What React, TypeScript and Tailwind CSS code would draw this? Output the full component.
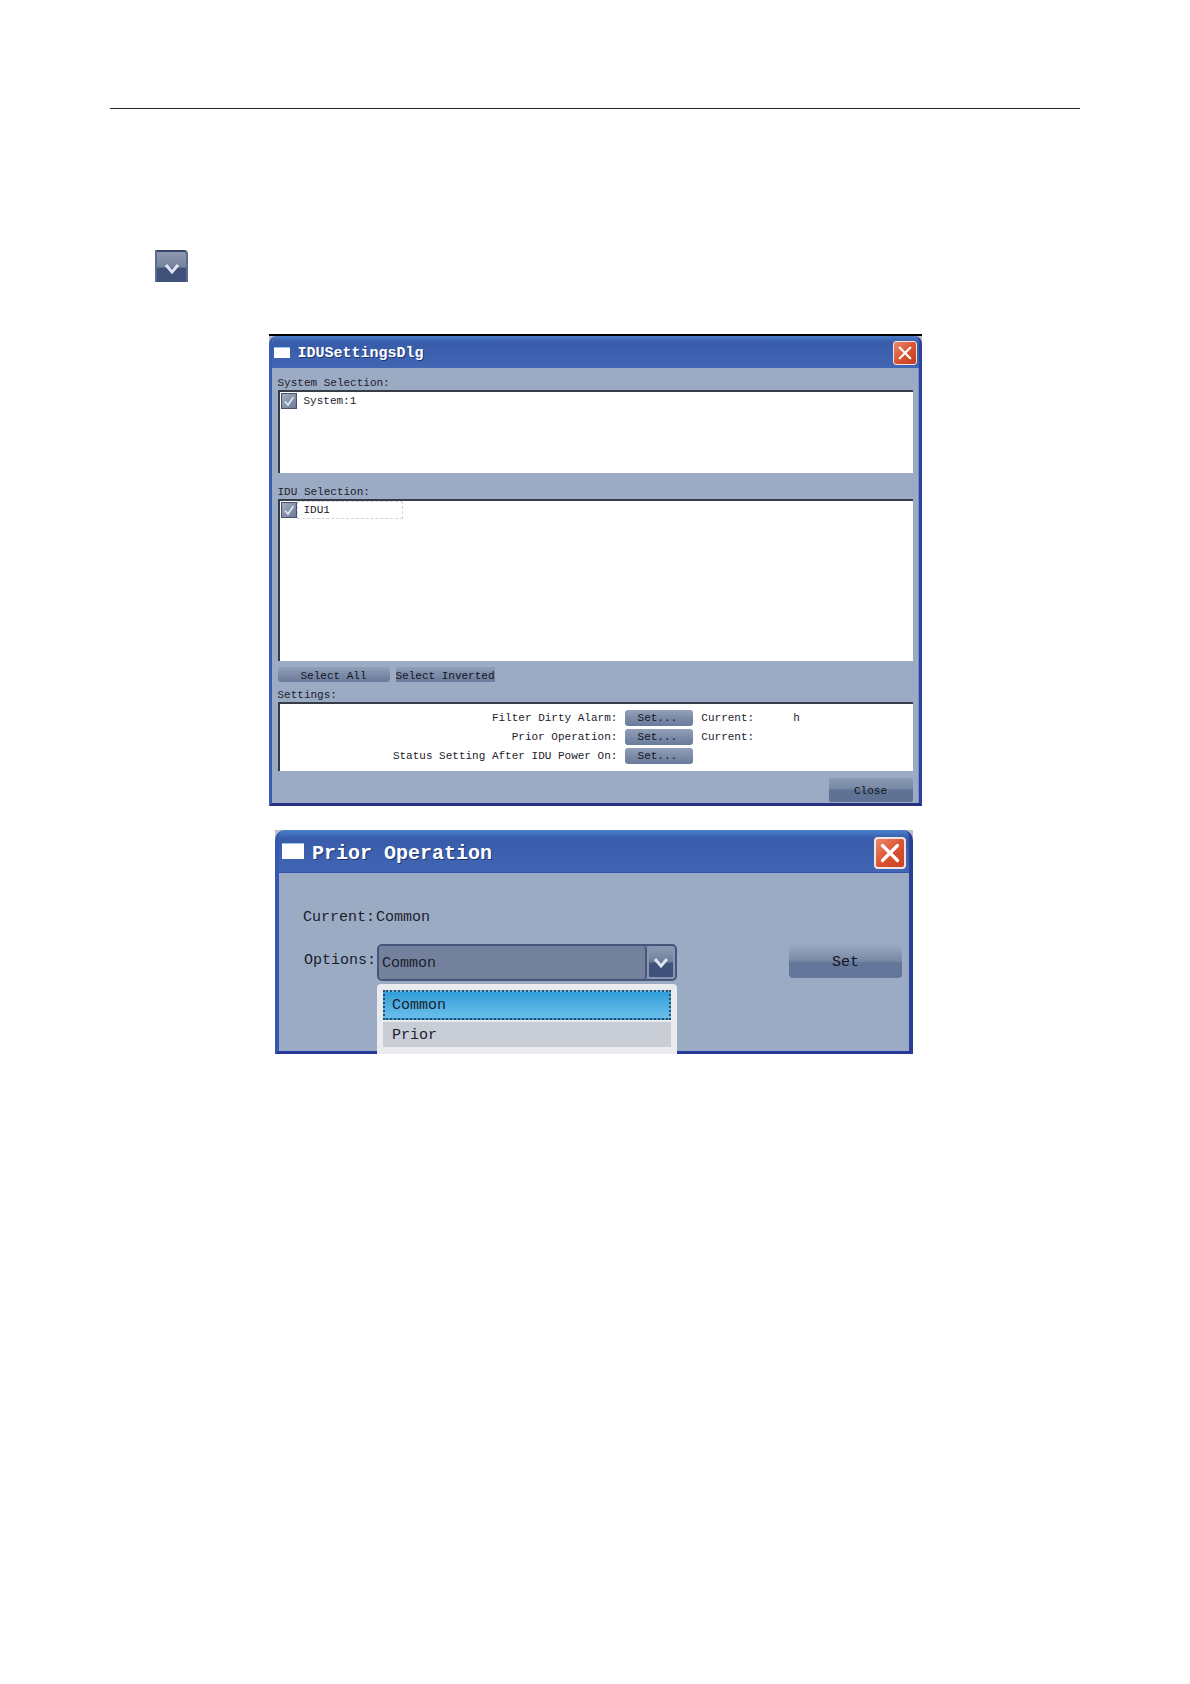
import { useId, useState } from 'react';
import type { ReactNode } from 'react';

const raised =
  'bg-linear-to-b from-[#93a0b9] via-[#7d8ba8] to-[#6a7b9b] text-[#10151f] hover:brightness-105';

function CloseIcon({ className }: { className: string }) {
  return (
    <svg viewBox="0 0 16 16" className={className} aria-hidden="true">
      <path d="M2 2 L14 14 M14 2 L2 14" stroke="#fff" strokeWidth="2.6" strokeLinecap="round" fill="none" />
    </svg>
  );
}

function Chevron({ className }: { className: string }) {
  return (
    <svg viewBox="0 0 16 12" className={className} aria-hidden="true">
      <path d="M2 2 L8 9 L14 2" stroke="#dbe6f0" strokeWidth="3" fill="none" />
    </svg>
  );
}

function CheckItem({ label, focused }: { label: string; focused?: boolean }) {
  const id = useId();
  const [checked, setChecked] = useState(true);
  return (
    <div className="flex items-center pl-px">
      <span className="grid">
        <input
          id={id}
          type="checkbox"
          checked={checked}
          onChange={(e) => setChecked(e.target.checked)}
          className="col-start-1 row-start-1 size-4 appearance-none border border-[#46526c] bg-linear-to-br from-[#a3adbd] to-[#6b7b9a]"
        />
        {checked && (
          <svg viewBox="0 0 16 16" className="pointer-events-none col-start-1 row-start-1 size-4" aria-hidden="true">
            <path d="M4 8.5 L7 12 L12.5 4" stroke="#dde5ee" strokeWidth="1.8" fill="none" />
          </svg>
        )}
      </span>
      <label
        htmlFor={id}
        className={
          focused
            ? 'w-[106px] border border-dashed border-[#d3d3d9] pl-[6px] leading-4'
            : 'border border-transparent pl-[6px] leading-4'
        }
      >
        {label}
      </label>
    </div>
  );
}

function Box({ className, children }: { className: string; children: ReactNode }) {
  return <div className={`border-t-2 border-l-2 border-[#363c48] bg-white ${className}`}>{children}</div>;
}

function SettingRow({ name, children }: { name: string; children?: ReactNode }) {
  return (
    <>
      <span className="pt-px text-right">{name}</span>
      <button type="button" aria-label={`${name} Set`} className={`h-4 rounded-[3px] pt-px pr-1 leading-[15px] ${raised}`}>
        Set...
      </button>
      <span className="pt-px">{children}</span>
    </>
  );
}

function SettingsDialog() {
  return (
    <section className="mx-auto w-full max-w-[653px] border-t-2 border-black bg-[#b9c0cc] text-[11px] leading-[15px] text-[#1b212c]">
      <div className="overflow-hidden rounded-t-lg border-r-[3px] border-b-[3px] border-l-[3px] border-r-[#2b419b] border-b-[#26317f] border-l-[#3a5cb0] bg-[#9cabc4]">
        <header className="flex h-8 items-center bg-linear-to-b from-[#4a7cc8] from-0% via-[#385ca9] via-20% to-[#4166b3] pr-[2px] pl-[2px]">
          <span className="h-[11px] w-4 border-t border-[#8fc8e6] bg-white" />
          <h2 className="ml-2 flex-1 pt-[3px] text-[15px] font-bold text-white [text-shadow:1px_1px_0_#1f3472]">
            IDUSettingsDlg
          </h2>
          <button
            type="button"
            aria-label="Close window"
            className="mt-[2px] grid size-6 place-items-center rounded-[3px] border border-[#f3e4e4] bg-linear-to-br from-[#e88a6c] via-[#dc5433] to-[#c23c1d]"
          >
            <CloseIcon className="size-[14px]" />
          </button>
        </header>
        <div className="border-r border-r-[#7390cb] pr-[5px] pb-px pl-[6px]">
          <h3 className="pt-2 leading-[14px]">System Selection:</h3>
          <Box className="h-[83px]">
            <CheckItem label="System:1" />
          </Box>
          <h3 className="pt-3 leading-[14px]">IDU Selection:</h3>
          <Box className="h-[162px]">
            <CheckItem label="IDU1" focused />
          </Box>
          <div className="mt-[6px] flex gap-[6px]">
            <button type="button" className={`h-[15px] w-28 rounded-[3px] pt-[3px] leading-3 ${raised}`}>
              Select All
            </button>
            <button type="button" className={`h-[15px] pt-[3px] leading-3 whitespace-nowrap ${raised}`}>
              Select Inverted
            </button>
          </div>
          <h3 className="pt-[6px] leading-[14px]">Settings:</h3>
          <Box className="h-[69px] pt-[6px]">
            <div className="grid grid-cols-[8fr_68px_5fr] gap-x-2 gap-y-[3px]">
              <SettingRow name="Filter Dirty Alarm:">
                Current:<span className="ml-[39px]">h</span>
              </SettingRow>
              <SettingRow name="Prior Operation:">Current:</SettingRow>
              <SettingRow name="Status Setting After IDU Power On:" />
            </div>
          </Box>
          <div className="mt-[7px] flex justify-end">
            <button
              type="button"
              className="h-6 w-[84px] rounded-[2px] bg-linear-to-b from-[#8c9ab6] from-0% via-[#7788a5] via-45% to-[#5f7293] to-50% pt-[2px] text-[#10151f] hover:brightness-105"
            >
              Close
            </button>
          </div>
        </div>
      </div>
    </section>
  );
}

function PriorDialog() {
  const [value, setValue] = useState('Common');
  return (
    <section className="mx-auto w-full max-w-[638px] bg-[#b9c0cc] text-[15px] leading-5 text-[#1b212c]">
      <div className="rounded-t-[10px] border-r-4 border-b-[3px] border-l-4 border-r-[#2b3e95] border-b-[#26389a] border-l-[#3558b0] bg-[#9cabc4]">
        <header className="flex h-[43px] items-center rounded-t-md border-b border-[#3457ac] bg-linear-to-b from-[#4a82cc] from-0% via-[#385ca9] via-20% to-[#4166b3] pr-[3px] pl-[3px]">
          <span className="h-4 w-[22px] border-t border-[#8fc8e6] bg-white" />
          <h2 className="ml-2 flex-1 pt-[5px] text-[20px] font-bold text-white [text-shadow:1px_1px_0_#1f3472]">
            Prior Operation
          </h2>
          <button
            type="button"
            aria-label="Close window"
            className="mt-[3px] grid size-8 place-items-center rounded-[4px] border-2 border-[#f3e4e4] bg-linear-to-br from-[#e88a6c] via-[#dc5433] to-[#c9431f]"
          >
            <CloseIcon className="size-5" />
          </button>
        </header>
        <div className="h-[178px] pr-[7px] pl-6">
          <p className="pt-[35px]">
            Current:<span className="ml-px">{value}</span>
          </p>
          <div className="mt-4 flex items-start">
            <label htmlFor="options" className="w-[74px] pt-[7px] pl-px">
              Options:
            </label>
            <div className="relative w-[300px]">
              <div className="flex h-[37px] overflow-hidden rounded-[5px] border-2 border-[#46557a] bg-[#73819d]">
                <select
                  id="options"
                  value={value}
                  onChange={(e) => setValue(e.target.value)}
                  className="min-w-0 flex-1 appearance-none rounded-r border-r-2 border-[#46557a] bg-[#73819d] pt-[2px] pl-[3px] outline-none"
                >
                  <option>Common</option>
                  <option>Prior</option>
                </select>
                <span className="pointer-events-none grid w-7 place-items-center rounded-[3px] border-2 border-[#8695b1] bg-linear-to-b from-[#8c99b1] from-0% via-[#6e7d99] via-48% to-[#40517a] to-52%">
                  <Chevron className="h-3 w-4" />
                </span>
              </div>
              <ul
                role="listbox"
                aria-label="Options"
                className="absolute top-10 left-0 h-[70px] w-full rounded-t-[4px] bg-[#e9ebee] px-[6px] pt-[6px]"
              >
                <li
                  role="option"
                  aria-selected="true"
                  className="h-[30px] border-2 border-dotted border-[#2f4c66] bg-linear-to-b from-[#2f9edb] to-[#69bfea] pl-[7px] leading-[28px]"
                >
                  Common
                </li>
                <li role="option" aria-selected="false" className="mt-[2px] h-[25px] bg-[#c9cdd6] pl-[9px] leading-[28px]">
                  Prior
                </li>
              </ul>
            </div>
            <button
              type="button"
              className="ml-auto h-[34px] w-[113px] rounded-[4px] bg-linear-to-b from-[#9cabc4] from-0% via-[#7887a4] via-50% to-[#64769a] to-55% pt-[3px] text-[#10151f] hover:brightness-105"
            >
              Set
            </button>
          </div>
        </div>
      </div>
    </section>
  );
}

export default function App() {
  return (
    <main className="min-h-screen bg-white px-[110px] pt-[108px] font-['Liberation_Mono',monospace]">
      <hr className="border-t border-[#222]" />
      <button
        type="button"
        aria-label="Expand"
        className="mt-[141px] ml-[45px] grid h-8 w-[33px] place-items-center rounded-tr border-x-2 border-t-2 border-x-[#5c6c90] border-t-[#364669] bg-linear-to-b from-[#8d98b0] from-0% via-[#76839d] via-50% to-[#40517a] to-55%"
      >
        <Chevron className="mt-[3px] h-3 w-4" />
      </button>
      <div className="mt-[52px]">
        <SettingsDialog />
      </div>
      <div className="mt-6 pr-[2px]">
        <PriorDialog />
      </div>
    </main>
  );
}
